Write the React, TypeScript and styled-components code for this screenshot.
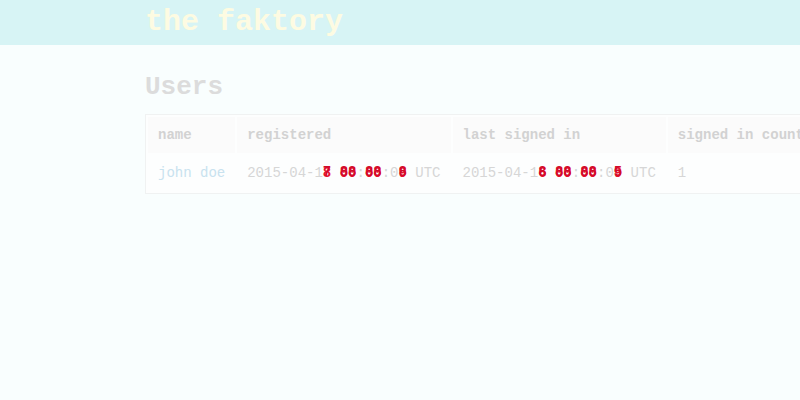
import React from 'react';
import styled, { createGlobalStyle } from 'styled-components';

const GlobalStyle = createGlobalStyle`
  html, body {
    margin: 0;
    padding: 0;
    background: #f9fefe;
    overflow: hidden;
  }
  body {
    font-family: "Liberation Mono", "Courier New", monospace;
  }
`;

const TopBar = styled.header`
  height: 45px;
  background: #d7f4f5;
`;

const Wrap = styled.div`
  width: 510px;
  margin: 0 auto;
`;

const Brand = styled.h1`
  margin: 0;
  padding-top: 3px;
  font-size: 30px;
  line-height: 38px;
  font-weight: bold;
  color: #fdfbe2;
`;

const Title = styled.h2`
  margin: 27px 0 12px;
  font-size: 26px;
  line-height: 30px;
  font-weight: bold;
  color: #dcdcdc;
`;

const Table = styled.table`
  border: 1px solid #f0f2f2;
  border-spacing: 2px;
  background: #fdfefe;
  font-size: 14px;
  white-space: nowrap;
`;

const Th = styled.th`
  background: #fbfbfb;
  color: #d2d2d2;
  font-weight: bold;
  text-align: left;
  padding: 10px 10px 10px 10px;
  line-height: 16px;
`;

const Td = styled.td`
  color: #d6d6d6;
  padding: 10px 10px 10px 10px;
  line-height: 16px;
`;

const UserLink = styled.a`
  color: #c8e2ef;
  text-decoration: none;
`;

const Glitch = styled.span`
  position: relative;
  display: inline-block;
  color: #e8102e;
  font-weight: bold;
`;

const GlitchTop = styled.span`
  position: absolute;
  left: 0;
  top: 0;
  color: #d20a2a;
  font-weight: bold;
  transform: translateY(-1px);
`;

const Flicker: React.FC<{ a: string; b: string }> = ({ a, b }) => (
  <Glitch>
    {a}
    <GlitchTop>{b}</GlitchTop>
  </Glitch>
);

const Stamp: React.FC<{ d: string[] }> = ({ d }) => (
  <>
    2015-04-1<Flicker a={d[0]} b={d[1]} /> <Flicker a="00" b="88" />:
    <Flicker a="00" b="88" />:0<Flicker a={d[2]} b={d[3]} /> UTC
  </>
);

export default function App() {
  return (
    <>
      <GlobalStyle />
      <TopBar>
        <Wrap>
          <Brand>the faktory</Brand>
        </Wrap>
      </TopBar>
      <Wrap>
        <Title>Users</Title>
        <Table>
          <thead>
            <tr>
              <Th>name</Th>
              <Th>registered</Th>
              <Th>last signed in</Th>
              <Th>signed in count</Th>
            </tr>
          </thead>
          <tbody>
            <tr>
              <Td>
                <UserLink href="#">john doe</UserLink>
              </Td>
              <Td>
                <Stamp d={['8', '7', '9', '8']} />
              </Td>
              <Td>
                <Stamp d={['6', '8', '9', '5']} />
              </Td>
              <Td>1</Td>
            </tr>
          </tbody>
        </Table>
      </Wrap>
    </>
  );
}
